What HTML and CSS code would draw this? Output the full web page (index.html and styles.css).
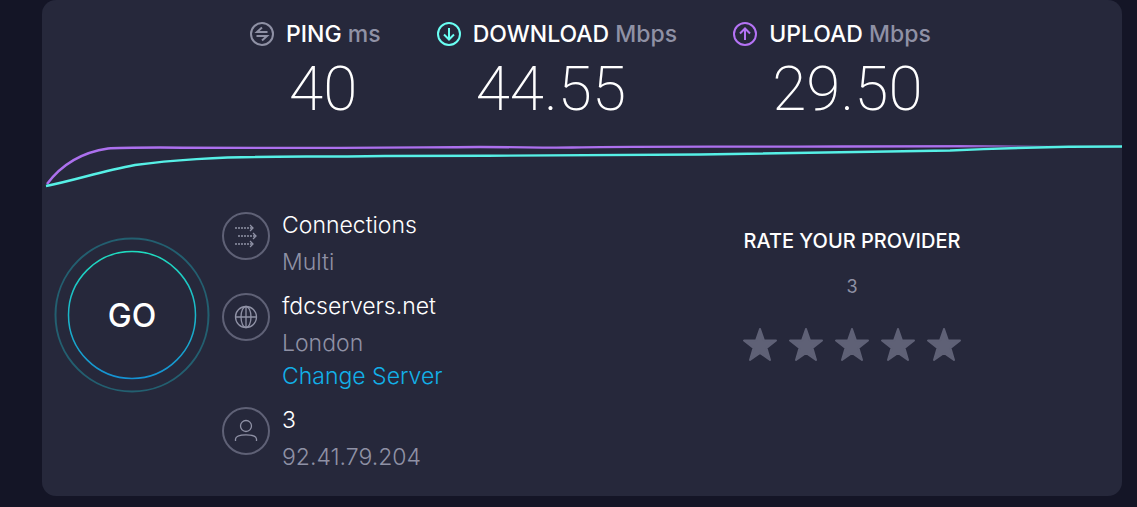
FILE: index.html
```
<!DOCTYPE html>
<html lang="en">
<head>
    <meta charset="UTF-8">
    <meta name="viewport" content="width=device-width, initial-scale=1.0">
    <title>Speed Test Result</title>
    <link rel="stylesheet" href="styles.css">
</head>
<body>
    <main class="card">
        <!-- Results -->
        <section class="metrics">
            <div class="metric">
                <h2 class="metric-label">
                    <svg class="metric-icon ping" viewBox="0 0 26 26" aria-hidden="true">
                        <circle cx="13" cy="13" r="11" />
                        <path d="M13 6.500 8 11H18.500M7.500 15H18L13 19.500" />
                    </svg>
                    <span>PING <span class="unit">ms</span></span>
                </h2>
                <div class="metric-value">40</div>
            </div>
            <div class="metric">
                <h2 class="metric-label">
                    <svg class="metric-icon download" viewBox="0 0 26 26" aria-hidden="true">
                        <circle cx="13" cy="13" r="11" />
                        <path d="M13 7V18.500M8 13.500 13 18.500 18 13.500" />
                    </svg>
                    <span>DOWNLOAD <span class="unit">Mbps</span></span>
                </h2>
                <div class="metric-value">44.55</div>
            </div>
            <div class="metric">
                <h2 class="metric-label">
                    <svg class="metric-icon upload" viewBox="0 0 26 26" aria-hidden="true">
                        <circle cx="13" cy="13" r="11" />
                        <path d="M13 19V7.500M8 12.500 13 7.500 18 12.500" />
                    </svg>
                    <span>UPLOAD <span class="unit">Mbps</span></span>
                </h2>
                <div class="metric-value">29.50</div>
            </div>
        </section>

        <!-- Speed over time -->
        <svg class="chart" viewBox="0 0 1080 60" preserveAspectRatio="none" aria-hidden="true">
            <defs>
                <linearGradient id="fade" gradientUnits="userSpaceOnUse" x1="0" y1="0" x2="1080" y2="0">
                    <stop offset="0.85" stop-color="#ac70ee" />
                    <stop offset="0.94" stop-color="#ac70ee" stop-opacity="0" />
                </linearGradient>
            </defs>
            <path class="line" stroke="url(#fade)" d="M5 54C20 34 42 22 66 18.500C75 17.500 90 17.500 118 17.500C250 18.500 340 17.500 438 17C480 17 500 18 530 17.500C590 16 700 17 800 16.500C900 16 980 16 1030 16" />
            <path class="line line-download" d="M4 56C34 50 60 41 93 35C130 30 180 27 213 27C250 26 270 27 343 26C450 26 580 25 658 24.500C760 23 850 22 908 20.500C960 18 1000 16.500 1080 16.500" />
        </svg>

        <div class="bottom">
            <button class="go" type="button">
                <svg class="go-rings" viewBox="0 0 156 156" aria-hidden="true">
                    <defs>
                        <linearGradient id="ring" x1="0" y1="0" x2="0" y2="1">
                            <stop offset="0" stop-color="#1fdcc0" />
                            <stop offset="1" stop-color="#1591d2" />
                        </linearGradient>
                    </defs>
                    <circle class="ring-outer" cx="78" cy="78" r="76.500" />
                    <circle class="ring-inner" cx="78" cy="78" r="63.500" />
                </svg>
                <span class="go-text">GO</span>
            </button>

            <ul class="details">
                <li class="detail">
                    <svg class="detail-icon" viewBox="0 0 48 48" aria-hidden="true">
                        <circle class="border" cx="24" cy="24" r="23" />
                        <path class="dots" d="M13 16H30M16 24H33M13 32H30" />
                        <path d="M28 13 31 16 28 19M31 21 34 24 31 27M28 29 31 32 28 35" />
                    </svg>
                    <div>
                        <div class="name">Connections</div>
                        <div class="info">Multi</div>
                    </div>
                </li>
                <li class="detail">
                    <svg class="detail-icon" viewBox="0 0 48 48" aria-hidden="true">
                        <circle class="border" cx="24" cy="24" r="23" />
                        <circle cx="24" cy="24" r="10.500" />
                        <ellipse cx="24" cy="24" rx="5" ry="10.500" />
                        <path d="M13.500 24H34.500M24 13.500V34.500" />
                    </svg>
                    <div>
                        <div class="name">fdcservers.net</div>
                        <div class="info">London</div>
                        <a class="change" href="#">Change Server</a>
                    </div>
                </li>
                <li class="detail">
                    <svg class="detail-icon" viewBox="0 0 48 48" aria-hidden="true">
                        <circle class="border" cx="24" cy="24" r="23" />
                        <circle cx="24" cy="19" r="5.500" />
                        <path d="M13.500 34V32C14 26.500 34 26.500 34.500 32V34" />
                    </svg>
                    <div>
                        <div class="name">3</div>
                        <div class="info">92.41.79.204</div>
                    </div>
                </li>
            </ul>

            <section class="rating">
                <h3 class="rating-title">RATE YOUR PROVIDER</h3>
                <div class="provider">3</div>
                <div class="stars">
                    <button class="star" type="button" aria-label="1 star"><svg viewBox="0 0 34 34"><path d="M17 1 21 12.500H33L23.500 20 27 32 17 25 7 32 10.500 20 1 12.500H13Z" /></svg></button>
                    <button class="star" type="button" aria-label="2 stars"><svg viewBox="0 0 34 34"><path d="M17 1 21 12.500H33L23.500 20 27 32 17 25 7 32 10.500 20 1 12.500H13Z" /></svg></button>
                    <button class="star" type="button" aria-label="3 stars"><svg viewBox="0 0 34 34"><path d="M17 1 21 12.500H33L23.500 20 27 32 17 25 7 32 10.500 20 1 12.500H13Z" /></svg></button>
                    <button class="star" type="button" aria-label="4 stars"><svg viewBox="0 0 34 34"><path d="M17 1 21 12.500H33L23.500 20 27 32 17 25 7 32 10.500 20 1 12.500H13Z" /></svg></button>
                    <button class="star" type="button" aria-label="5 stars"><svg viewBox="0 0 34 34"><path d="M17 1 21 12.500H33L23.500 20 27 32 17 25 7 32 10.500 20 1 12.500H13Z" /></svg></button>
                </div>
            </section>
        </div>
    </main>
</body>
</html>
```
FILE: styles.css
```
* {
    margin: 0;
    padding: 0;
    box-sizing: border-box;
}

body {
    background: #141526;
    color: #ffffff;
    font-family: Inter, "Open Sans", sans-serif;
    font-size: 23px;
}

button {
    background: none;
    border: none;
    color: inherit;
    font-family: inherit;
    cursor: pointer;
}

.card {
    margin: 0 15px 11px 42px;
    padding-bottom: 22px;
    background: #26283b;
    border-radius: 14px;
}

.metrics {
    display: flex;
    justify-content: center;
    gap: 55px;
    padding: 20px 0 0 16px;
}

.metric-label {
    display: flex;
    align-items: center;
    gap: 11px;
    font-size: 23px;
    font-weight: 500;
    line-height: 28px;
}

.metric-icon {
    width: 26px;
    height: 26px;
    fill: none;
    stroke-width: 2;
}

.ping {
    stroke: #8f91a5;
}

.download {
    stroke: #6afff3;
}

.upload {
    stroke: #b573f5;
}

.unit {
    color: #8f91a5;
}

.metric-value {
    padding-left: 40px;
    font-family: Roboto, sans-serif;
    font-size: 62px;
    font-weight: 200;
    line-height: 82px;
}

.chart {
    display: block;
    width: 100%;
    height: 60px;
}

.line {
    fill: none;
    stroke-width: 2.4;
    vector-effect: non-scaling-stroke;
}

.line-download {
    stroke: #56f0e6;
}

.bottom {
    display: grid;
    grid-template-columns: 180px 2fr 3fr;
    align-items: start;
    padding-top: 22px;
}

.go {
    display: grid;
    place-items: center;
    justify-self: center;
    margin-top: 25px;
}

.go-rings,
.go-text {
    grid-area: 1 / 1;
}

.go-rings {
    width: 156px;
    height: 156px;
    fill: none;
}

.ring-outer {
    stroke: #235f70;
    stroke-width: 2;
}

.ring-inner {
    stroke: url(#ring);
    stroke-width: 1.5;
}

.go-text {
    font-size: 32px;
    font-weight: 500;
}

.details {
    display: grid;
    gap: 14px;
    list-style: none;
}

.detail {
    display: flex;
    align-items: flex-start;
    gap: 12px;
    font-weight: 300;
}

.detail-icon {
    width: 48px;
    height: 48px;
    fill: none;
    stroke: #9092a6;
    stroke-width: 1.3;
}

.border {
    stroke: #5f6176;
    stroke-width: 2;
}

.dots {
    stroke-dasharray: 2 1;
}

.name {
    margin-bottom: 8px;
    line-height: 26px;
}

.info {
    color: #8f91a5;
    line-height: 33px;
}

.change {
    display: block;
    color: #12b0e8;
    line-height: 33px;
    text-decoration: none;
}

.rating {
    text-align: center;
}

.rating-title {
    padding-top: 16px;
    font-size: 20px;
    font-weight: 500;
    line-height: 26px;
}

.provider {
    margin-top: 20px;
    color: #8f91a5;
    font-size: 18px;
    line-height: 26px;
}

.stars {
    display: flex;
    justify-content: center;
    gap: 12px;
    margin-top: 28px;
}

.star {
    width: 34px;
    height: 34px;
}

.star svg {
    display: block;
    fill: #5f6176;
    stroke: #5f6176;
    stroke-width: 2;
    stroke-linejoin: round;
}
```
